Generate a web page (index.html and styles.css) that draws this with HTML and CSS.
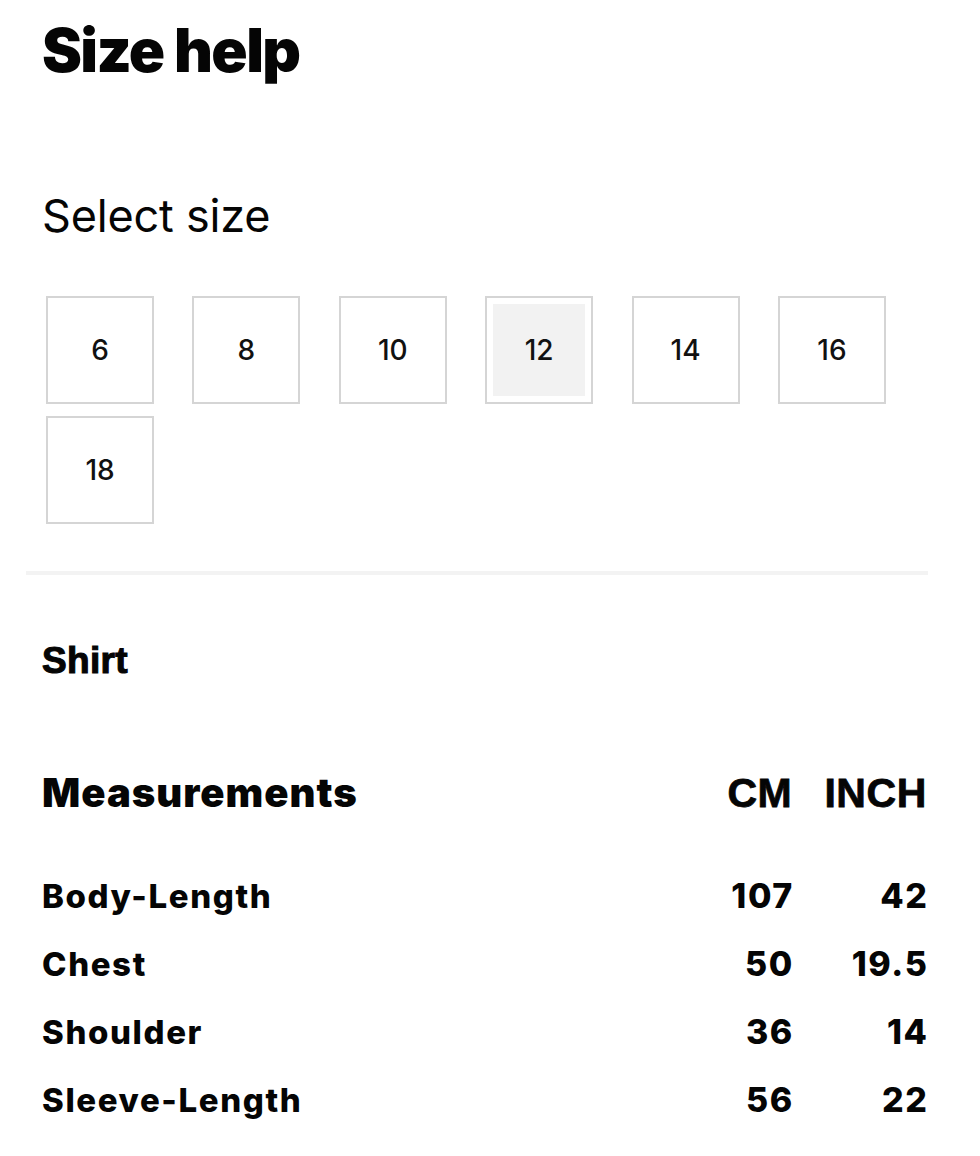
FILE: index.html
```html
<!DOCTYPE html>
<html lang="en">
<head>
<meta charset="utf-8">
<title>Size help</title>
<link rel="stylesheet" href="styles.css">
</head>
<body>
<div class="page">
  <h1 class="title">Size help</h1>
  <h2 class="select-label">Select size</h2>
  <div class="sizes">
    <button class="size">6</button>
    <button class="size">8</button>
    <button class="size">10</button>
    <button class="size is-selected">12</button>
    <button class="size">14</button>
    <button class="size">16</button>
    <button class="size">18</button>
  </div>
  <div class="divider"></div>
  <h3 class="garment">Shirt</h3>
  <div class="measure">
    <div class="m-head m-label">Measurements</div>
    <div class="m-head m-unit">CM</div>
    <div class="m-head m-unit">INCH</div>

    <div class="m-cell m-label row-first">Body-Length</div>
    <div class="m-cell m-num row-first">107</div>
    <div class="m-cell m-num row-first">42</div>

    <div class="m-cell m-label">Chest</div>
    <div class="m-cell m-num">50</div>
    <div class="m-cell m-num">19.5</div>

    <div class="m-cell m-label">Shoulder</div>
    <div class="m-cell m-num">36</div>
    <div class="m-cell m-num">14</div>

    <div class="m-cell m-label">Sleeve-Length</div>
    <div class="m-cell m-num">56</div>
    <div class="m-cell m-num">22</div>
  </div>
</div>
</body>
</html>
```

FILE: styles.css
```css
* { box-sizing: border-box; }
html, body {
  margin: 0;
  padding: 0;
  background: #ffffff;
  color: #050505;
}
.page {
  width: 980px;
  padding: 0 53px 0 42px;
}
.title {
  margin: 20px 0 0;
  font-family: Inter, "Liberation Sans", sans-serif;
  font-weight: 900;
  font-size: 60px;
  line-height: 60px;
  letter-spacing: -1.6px;
}
.select-label {
  margin: 113px 0 0;
  font-family: Inter, "Liberation Sans", sans-serif;
  font-weight: 400;
  font-size: 45px;
  line-height: 45px;
  letter-spacing: -0.2px;
}
.sizes {
  margin: 58px 0 0 4px;
  display: grid;
  grid-template-columns: repeat(6, 108px);
  column-gap: 38.4px;
  row-gap: 12px;
}
.size {
  width: 108px;
  height: 108px;
  padding: 0;
  border: 2px solid #d5d5d5;
  background: #ffffff;
  font-family: Inter, "Liberation Sans", sans-serif;
  font-weight: 500;
  font-size: 28px;
  color: #111111;
  display: flex;
  align-items: center;
  justify-content: center;
}
.size.is-selected {
  background: #f2f2f2;
  box-shadow: inset 0 0 0 6px #ffffff;
}
.divider {
  margin: 47px 0 0 -16px;
  width: 902px;
  height: 4px;
  background: #f3f3f3;
}
.garment {
  margin: 67px 0 0;
  font-family: "Liberation Sans", Arial, sans-serif;
  font-weight: 700;
  font-size: 37px;
  line-height: 37px;
  letter-spacing: 0.3px;
  -webkit-text-stroke: 1.1px #050505;
}
.measure {
  margin-top: 80px;
  display: grid;
  grid-template-columns: 1fr auto auto;
  column-gap: 32px;
}
.m-head {
  line-height: 68px;
  font-size: 40px;
}
.m-head.m-label {
  font-family: Inter, "Liberation Sans", sans-serif;
  font-weight: 900;
  letter-spacing: 1px;
}
.m-unit {
  font-family: "Liberation Sans", Arial, sans-serif;
  font-weight: 700;
  font-size: 41px;
  letter-spacing: 0.6px;
  text-align: right;
  -webkit-text-stroke: 0.8px #050505;
}
.m-cell {
  font-family: Inter, "Liberation Sans", sans-serif;
  font-weight: 800;
  font-size: 33px;
  line-height: 68px;
  letter-spacing: 1.6px;
}
.m-num {
  text-align: right;
  font-size: 34px;
  letter-spacing: 1.6px;
  margin-right: -1.6px;
}
.row-first {
  margin-top: 35px;
}
```
